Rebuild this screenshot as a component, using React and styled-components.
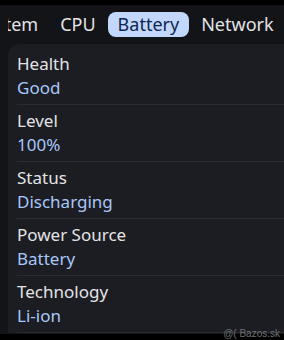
import React from 'react';
import styled, { createGlobalStyle } from 'styled-components';

/**
 * Define styles
 */

const GlobalStyle = createGlobalStyle`
  html, body {
    margin: 0;
    padding: 0;
    background-color: #000;
  }
  body {
    font-family: "Noto Sans", "DejaVu Sans", sans-serif;
    -webkit-font-smoothing: antialiased;
  }
`

const Screen = styled.div`
  position: relative;
  width: 284px;
  height: 340px;
  overflow: hidden;
  background-color: #000;
  padding-top: 5px;
  box-sizing: border-box;
`

const Surface = styled.div`
  height: 329px;
  overflow: hidden;
  background-color: #131418;
`

const TabStrip = styled.div`
  overflow: hidden;
  margin-left: 8px;
  padding-top: 7px;
`

const TabTrack = styled.div`
  display: flex;
  gap: 2px;
  margin-left: -41px;
  white-space: nowrap;
`

const Tab = styled.div`
  height: 25px;
  line-height: 25px;
  padding: 0 10px;
  border-radius: 8px;
  font-size: 18px;
  color: ${p => (p.$active ? '#0d2751' : '#e3e3e6')};
  background-color: ${p => (p.$active ? '#c2d7fb' : 'transparent')};
`

const Panel = styled.div`
  margin: 7px 0 0 8px;
  width: 300px;
  padding: 4px 0 0 9px;
  border-radius: 12px 0 0 0;
  background-color: #1c1d22;
`

const Row = styled.div`
  padding: 4px 0;
  border-bottom: 1px solid #2b2c31;
`

const Label = styled.div`
  font-size: 17px;
  line-height: 24px;
  color: #e3e3e6;
`

const Value = styled.div`
  font-size: 17px;
  line-height: 24px;
  color: #a8c7fa;
`

const Watermark = styled.div`
  position: absolute;
  right: 4px;
  bottom: 1px;
  font-family: "Liberation Sans", Arial, sans-serif;
  font-size: 10px;
  color: #6f7075;
`

/**
 * Define data
 */

const tabs = ['System', 'CPU', 'Battery', 'Network'];

const rows = [
  { label: 'Health', value: 'Good' },
  { label: 'Level', value: '100%' },
  { label: 'Status', value: 'Discharging' },
  { label: 'Power Source', value: 'Battery' },
  { label: 'Technology', value: 'Li-ion' },
];

/**
 * Define component
 */

function App() {
  return (
    <Screen>
      <GlobalStyle />
      <Surface>
        <TabStrip>
          <TabTrack>
            {tabs.map(t => (
              <Tab key={t} $active={t === 'Battery'}>{t}</Tab>
            ))}
          </TabTrack>
        </TabStrip>
        <Panel>
          {rows.map(r => (
            <Row key={r.label}>
              <Label>{r.label}</Label>
              <Value>{r.value}</Value>
            </Row>
          ))}
        </Panel>
      </Surface>
      <Watermark>@( Bazos.sk</Watermark>
    </Screen>
  );
}

/**
 * Export component
 */

export default App;
